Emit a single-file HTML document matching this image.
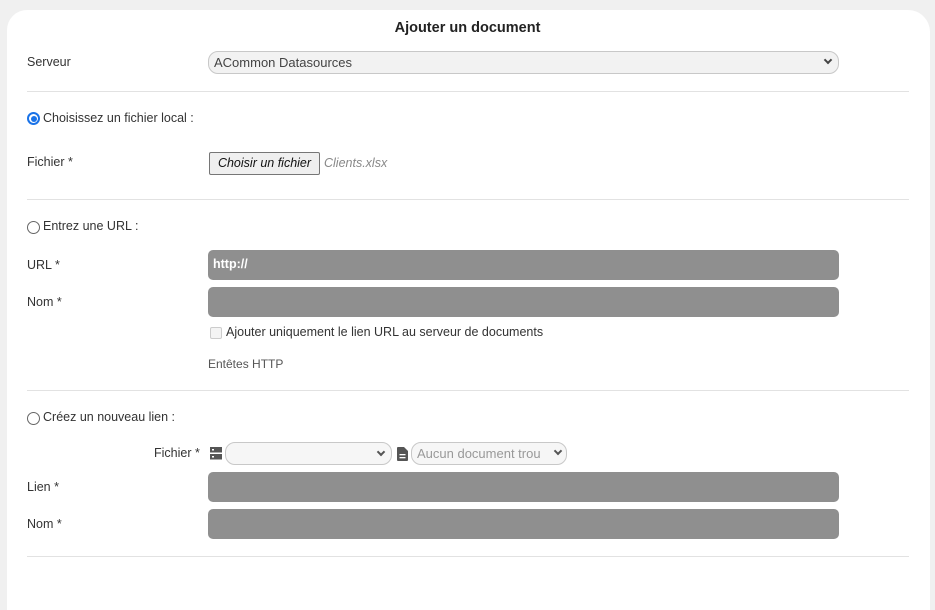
<!DOCTYPE html>
<html><head><meta charset="utf-8"><style>
*{box-sizing:border-box;margin:0;padding:0}
body{width:935px;height:564px;background:#f0f0f0;font-family:"Liberation Sans",sans-serif;font-size:12.5px;color:#333;position:relative;overflow:hidden}
.card{position:absolute;left:7px;top:10px;width:923px;height:600px;background:#fff;border-radius:20px 22px 0 0}
.a{position:absolute;white-space:nowrap}
.hr{position:absolute;left:27px;width:882px;height:1px;background:#e2e2e2}
.g{position:absolute;left:208px;width:631px;height:30px;background:#8f8f8f;border-radius:5px}
.sel{position:absolute;background:#f2f2f2;border:1px solid #c8c8c8;border-radius:10px;color:#444}
.chev{position:absolute;width:6px;height:6px;border-right:2px solid #444;border-bottom:2px solid #444;transform:rotate(45deg)}
.radio{position:absolute;width:13px;height:13px;border:1px solid #666;border-radius:50%;background:#fff}
</style></head><body>
<div class="card"></div>
<div class="a" style="left:0;width:935px;text-align:center;top:20px;font-size:14.5px;color:#222;font-weight:bold">Ajouter un document</div>
<div class="a" style="left:27px;top:55px">Serveur</div>
<div class="sel" style="left:208px;top:51px;width:631px;height:23px"><span class="a" style="left:5px;top:3px;font-size:13px">ACommon Datasources</span><div class="chev" style="right:7px;top:5px"></div></div>
<div class="hr" style="top:91px"></div>
<div class="radio" style="left:27px;top:112px;border:2px solid #1a73e8"><div style="position:absolute;left:1.5px;top:1.5px;width:6px;height:6px;border-radius:50%;background:#1a73e8"></div></div>
<div class="a" style="left:43px;top:111px">Choisissez un fichier local :</div>
<div class="a" style="left:27px;top:155px">Fichier *</div>
<div class="a" style="left:209px;top:152px;width:111px;height:23px;background:#efefef;border:1px solid #767676;border-radius:2px;font-style:italic;text-align:center;line-height:21px;color:#111">Choisir un fichier</div>
<div class="a" style="left:324px;top:156px;color:#888;font-style:italic">Clients.xlsx</div>
<div class="hr" style="top:199px"></div>
<div class="radio" style="left:27px;top:221px"></div>
<div class="a" style="left:43px;top:219px">Entrez une URL :</div>
<div class="a" style="left:27px;top:258px">URL *</div>
<div class="g" style="top:250px"><span class="a" style="left:5px;top:7px;color:#fff;font-weight:bold">http://</span></div>
<div class="a" style="left:27px;top:295px">Nom *</div>
<div class="g" style="top:287px"></div>
<div class="a" style="left:210px;top:327px;width:12px;height:12px;border:1px solid #ccc;border-radius:2px;background:#f4f4f4"></div>
<div class="a" style="left:226px;top:325px">Ajouter uniquement le lien URL au serveur de documents</div>
<div class="a" style="left:208px;top:357px;color:#555;font-size:12px">Entêtes HTTP</div>
<div class="hr" style="top:390px"></div>
<div class="radio" style="left:27px;top:412px"></div>
<div class="a" style="left:43px;top:410px">Créez un nouveau lien :</div>
<div class="a" style="left:154px;top:446px">Fichier *</div>
<svg class="a" style="left:210px;top:447px" width="12" height="13" viewBox="0 0 12 13"><rect x="0" y="0" width="12" height="5.5" fill="#555"/><rect x="0" y="7" width="12" height="5.5" fill="#555"/><rect x="2" y="2" width="2" height="1.5" fill="#fff"/><rect x="2" y="9" width="2" height="1.5" fill="#fff"/></svg>
<div class="sel" style="left:225px;top:442px;width:167px;height:23px;background:#f6f6f6"><div class="chev" style="right:7px;top:6px;border-color:#555"></div></div>
<svg class="a" style="left:397px;top:447px" width="11" height="14" viewBox="0 0 11 14"><path d="M0 1Q0 0 1 0H7L11 4V13Q11 14 10 14H1Q0 14 0 13Z" fill="#555"/><rect x="2.5" y="7" width="6" height="1.3" fill="#fff"/><rect x="2.5" y="10" width="6" height="1.3" fill="#fff"/></svg>
<div class="sel" style="left:411px;top:442px;width:156px;height:23px;background:#f6f6f6;overflow:hidden"><span class="a" style="left:5px;top:3px;color:#999;font-size:13px">Aucun document trou</span><div class="chev" style="right:5px;top:5px;border-color:#555;background:#f6f6f6"></div></div>
<div class="a" style="left:27px;top:480px">Lien *</div>
<div class="g" style="top:472px"></div>
<div class="a" style="left:27px;top:517px">Nom *</div>
<div class="g" style="top:509px"></div>
<div class="hr" style="top:556px"></div>
</body></html>
